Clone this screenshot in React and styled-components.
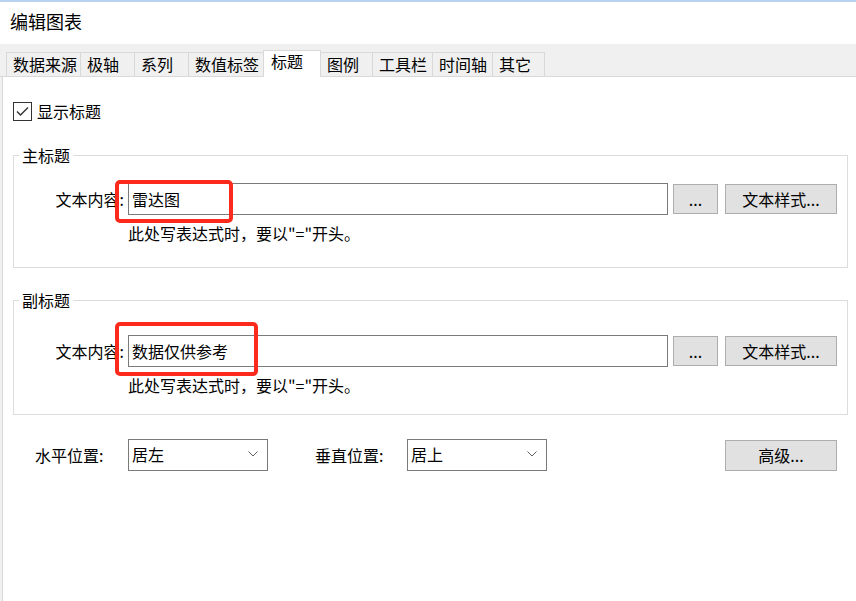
import React from 'react';
import styled, { createGlobalStyle } from 'styled-components';

const Global = createGlobalStyle`
  html, body {
    margin: 0;
    padding: 0;
    background: #ffffff;
  }
  body {
    font-family: "Noto Sans CJK SC", "Noto Sans", sans-serif;
    font-size: 16px;
    color: #000000;
  }
`;

const Page = styled.div`
  display: flex;
  flex-direction: column;
  height: 100vh;
  overflow: hidden;
`;

const TopEdge = styled.div`
  height: 2px;
  background: #b9d4ee;
`;

const Header = styled.div`
  height: 42px;
  display: flex;
  align-items: center;
  padding: 0 0 4px 10px;
  box-sizing: border-box;
  font-size: 18px;
`;

const TabStrip = styled.div`
  height: 33px;
  box-sizing: border-box;
  display: flex;
  align-items: flex-end;
  padding-left: 6px;
  background: #f0f0f0;
  border-bottom: 1px solid #d9d9d9;
`;

const Tab = styled.div`
  box-sizing: border-box;
  width: ${p => p.$w}px;
  height: ${p => (p.$active ? 27 : 24)}px;
  margin-bottom: ${p => (p.$active ? -1 : 0)}px;
  margin-left: ${p => (p.$active ? -1 : 0)}px;
  padding: ${p => (p.$active ? '0 0 0 7px' : '1px 0 0 6px')};
  line-height: 20px;
  background: ${p => (p.$active ? '#ffffff' : '#f0f0f0')};
  border-top: 1px solid #d9d9d9;
  border-right: 1px solid #d9d9d9;
  border-left: ${p => (p.$active || p.$first ? '1px solid #d9d9d9' : 'none')};
  white-space: nowrap;
`;

const PanelArea = styled.div`
  flex: 1;
  display: flex;
  background: #f0f0f0;
  padding-left: 2px;
`;

const Panel = styled.div`
  flex: 1;
  background: #ffffff;
  border-left: 1px solid #d9d9d9;
  padding: 24px 0 0 10px;
`;

const CheckRow = styled.label`
  display: flex;
  align-items: center;
  gap: 5px;
  height: 20px;
  line-height: 20px;
`;

const CheckBox = styled.span`
  box-sizing: border-box;
  width: 19px;
  height: 19px;
  border: 1px solid #333333;
  background: #ffffff;
  display: flex;
  align-items: center;
  justify-content: center;
`;

const Group = styled.fieldset`
  box-sizing: border-box;
  width: 835px;
  min-width: 0;
  margin: ${p => p.$gap}px 0 0 0;
  padding: ${p => p.$top}px 0 ${p => p.$bottom}px 0;
  border: 1px solid #dcdcdc;
`;

const Legend = styled.legend`
  margin-left: 5px;
  padding: 0 3px;
  line-height: 20px;
`;

const FieldRow = styled.div`
  position: relative;
  display: flex;
  align-items: center;
  height: 32px;
`;

const FieldLabel = styled.div`
  box-sizing: border-box;
  width: ${p => p.$w}px;
  text-align: right;
  padding-right: 4px;
  line-height: 20px;
  white-space: nowrap;
`;

const TextBox = styled.div`
  box-sizing: border-box;
  width: 540px;
  height: 32px;
  border: 1px solid #7a7a7a;
  padding-left: 3px;
  display: flex;
  align-items: center;
  line-height: 20px;
`;

const Button = styled.button`
  box-sizing: border-box;
  width: ${p => p.$w}px;
  height: ${p => p.$h || 30}px;
  margin-left: ${p => p.$ml || 0}px;
  padding: 0;
  background: #e1e1e1;
  border: 1px solid #adadad;
  font: inherit;
  color: #000000;
  line-height: 20px;
`;

const Hint = styled.div`
  margin: 8px 0 0 114px;
  line-height: 20px;
`;

const Marker = styled.div`
  position: absolute;
  box-sizing: border-box;
  left: 101px;
  top: ${p => p.$top}px;
  width: ${p => p.$w}px;
  height: ${p => p.$h}px;
  border: 4px solid #fb2a1c;
  border-radius: 5px;
  pointer-events: none;
`;

const BottomRow = styled.div`
  box-sizing: border-box;
  width: 835px;
  display: flex;
  align-items: center;
  margin-top: 24px;
  padding: 0 11px 0 22px;
`;

const PlainLabel = styled.div`
  width: ${p => p.$w}px;
  margin-left: ${p => p.$ml || 0}px;
  line-height: 20px;
  white-space: nowrap;
`;

const Select = styled.div`
  box-sizing: border-box;
  width: 140px;
  height: 32px;
  border: 1px solid #7a7a7a;
  background: #ffffff;
  display: flex;
  align-items: center;
  justify-content: space-between;
  padding: 0 9px 3px 3px;
  line-height: 20px;
`;

const PushRight = styled.div`
  margin-left: auto;
`;

const tabs = [
  { label: '数据来源', w: 75 },
  { label: '极轴', w: 54 },
  { label: '系列', w: 54 },
  { label: '数值标签', w: 75 },
  { label: '标题', w: 58, active: true },
  { label: '图例', w: 52 },
  { label: '工具栏', w: 60 },
  { label: '时间轴', w: 60 },
  { label: '其它', w: 52 },
];

const Chevron = () => (
  <svg width="10" height="6" viewBox="0 0 10 6">
    <polyline points="0.5,0.5 5,5 9.5,0.5" fill="none" stroke="#606060" strokeWidth="1" />
  </svg>
);

function TitleGroup({ name, value, gap, top, bottom, marker }) {
  return (
    <Group $gap={gap} $top={top} $bottom={bottom}>
      <Legend>{name}</Legend>
      <FieldRow>
        <FieldLabel $w={114}>文本内容:</FieldLabel>
        <TextBox>{value}</TextBox>
        <Button $w={45} $ml={5}>...</Button>
        <Button $w={112} $ml={7}>文本样式...</Button>
        <Marker $top={marker.top} $w={marker.w} $h={marker.h} />
      </FieldRow>
      <Hint>此处写表达式时，要以"="开头。</Hint>
    </Group>
  );
}

function App() {
  return (
    <Page>
      <Global />
      <TopEdge />
      <Header>编辑图表</Header>
      <TabStrip>
        {tabs.map((t, i) => (
          <Tab key={t.label} $w={t.w} $active={t.active} $first={i === 0}>
            {t.label}
          </Tab>
        ))}
      </TabStrip>
      <PanelArea>
        <Panel>
          <CheckRow>
            <CheckBox>
              <svg width="13" height="11" viewBox="0 0 13 11">
                <polyline points="1,5.5 4.5,9 12,1.5" fill="none" stroke="#333333" strokeWidth="1.4" />
              </svg>
            </CheckBox>
            显示标题
          </CheckRow>

          <TitleGroup
            name="主标题"
            value="雷达图"
            gap={24}
            top={18}
            bottom={24}
            marker={{ top: -3, w: 118, h: 43 }}
          />
          <TitleGroup
            name="副标题"
            value="数据仅供参考"
            gap={22}
            top={25}
            bottom={19}
            marker={{ top: -13, w: 143, h: 54 }}
          />

          <BottomRow>
            <PlainLabel $w={93}>水平位置:</PlainLabel>
            <Select>
              居左
              <Chevron />
            </Select>
            <PlainLabel $w={92} $ml={47}>垂直位置:</PlainLabel>
            <Select>
              居上
              <Chevron />
            </Select>
            <PushRight>
              <Button $w={112} $h={31}>高级...</Button>
            </PushRight>
          </BottomRow>
        </Panel>
      </PanelArea>
    </Page>
  );
}

export default App;
